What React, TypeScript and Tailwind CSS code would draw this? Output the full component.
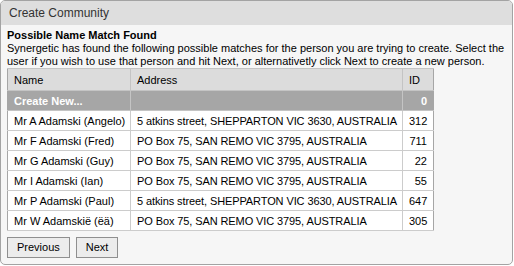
const rows = [
  { name: "Mr A Adamski (Angelo)", address: "5 atkins street, SHEPPARTON VIC 3630, AUSTRALIA", id: 312 },
  { name: "Mr F Adamski (Fred)", address: "PO Box 75, SAN REMO VIC 3795, AUSTRALIA", id: 711 },
  { name: "Mr G Adamski (Guy)", address: "PO Box 75, SAN REMO VIC 3795, AUSTRALIA", id: 22 },
  { name: "Mr I Adamski (Ian)", address: "PO Box 75, SAN REMO VIC 3795, AUSTRALIA", id: 55 },
  { name: "Mr P Adamski (Paul)", address: "5 atkins street, SHEPPARTON VIC 3630, AUSTRALIA", id: 647 },
  { name: "Mr W Adamskië (ëä)", address: "PO Box 75, SAN REMO VIC 3795, AUSTRALIA", id: 305 },
];

const App = () => {
  return (
    <div className="w-[514px] h-[266px] bg-white font-['Liberation_Sans',Arial,sans-serif] text-[11px] text-black">
      <div className="w-[513px] h-[265px] border border-[#a3a3a3] rounded-[5px] overflow-hidden bg-[#f6f6f6] flex flex-col">
        <div className="h-[24px] bg-[#dedede] flex items-center px-[8px] text-[12px] text-[#333333] shrink-0">
          Create Community
        </div>

        <div className="px-[6px] pt-[4px] flex flex-col">
          <div className="font-bold leading-[13px]">Possible Name Match Found</div>
          <p className="leading-[13px]">
            Synergetic has found the following possible matches for the person you are trying to create. Select the
            user if you wish to use that person and hit Next, or alternativetly click Next to create a new person.
          </p>

          <table className="table-fixed border-collapse w-[426px] border border-[#a6a6a6] leading-[14px]">
            <colgroup>
              <col className="w-[123px]" />
              <col className="w-[272px]" />
              <col className="w-[31px]" />
            </colgroup>
            <thead>
              <tr className="bg-[#dcdcdc] h-[22px]">
                <th className="text-left font-normal px-[6px] border border-[#c4c4c4] border-l-0">Name</th>
                <th className="text-left font-normal px-[6px] border border-[#c4c4c4]">Address</th>
                <th className="text-left font-normal px-[6px] border border-[#c4c4c4] border-r-0">ID</th>
              </tr>
            </thead>
            <tbody>
              <tr className="bg-[#a6a6a6] h-[20px] text-white font-bold">
                <td className="px-[6px] border border-[#c4c4c4] border-l-0">Create New...</td>
                <td className="px-[6px] border border-[#c4c4c4]"></td>
                <td className="px-[6px] text-right border border-[#c4c4c4] border-r-0">0</td>
              </tr>
              {rows.map((r) => (
                <tr key={r.id} className="bg-white h-[20px]">
                  <td className="px-[6px] border border-[#cccccc] border-l-0 whitespace-nowrap">{r.name}</td>
                  <td className="pl-[6px] pr-0 border border-[#cccccc] whitespace-nowrap tracking-[-0.1px]">{r.address}</td>
                  <td className="px-[6px] text-right border border-[#cccccc] border-r-0">{r.id}</td>
                </tr>
              ))}
            </tbody>
          </table>

          <div className="flex gap-[6px] mt-[6px]">
            <button className="h-[21px] px-[9px] border border-[#8f8f8f] bg-[#ececec] text-black leading-none">
              Previous
            </button>
            <button className="h-[21px] px-[9px] border border-[#8f8f8f] bg-[#ececec] text-black leading-none">
              Next
            </button>
          </div>
        </div>
      </div>
    </div>
  );
};

export default App;
